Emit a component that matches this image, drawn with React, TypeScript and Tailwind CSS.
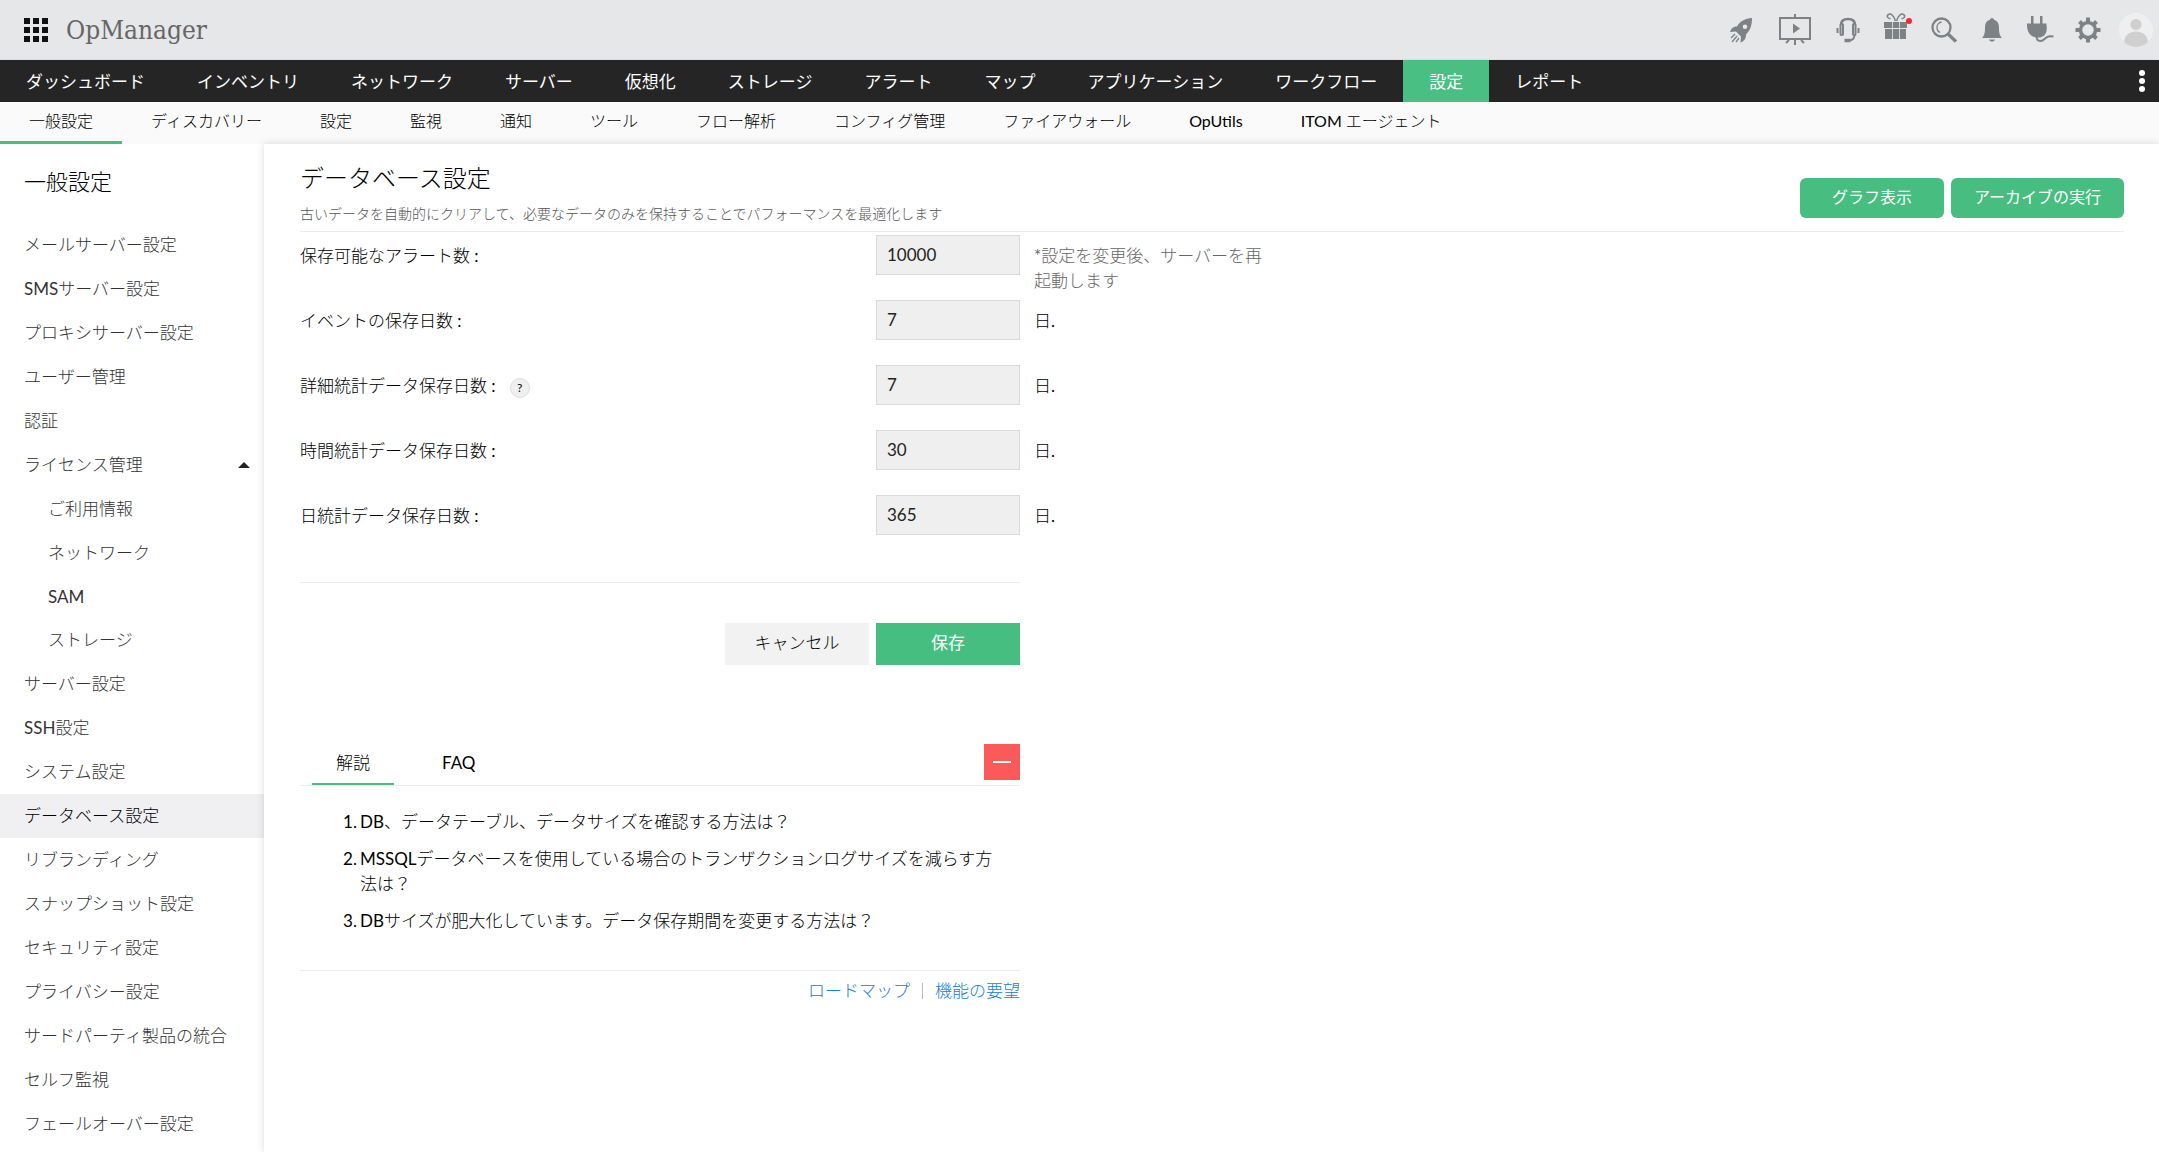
import React, { useState } from "react";

type SideItem = {
  label: string;
  sub?: boolean;
  open?: boolean;
};

type Field = {
  id: string;
  label: string;
  value: string;
  help?: boolean;
};

const NAV = [
  "ダッシュボード",
  "インベントリ",
  "ネットワーク",
  "サーバー",
  "仮想化",
  "ストレージ",
  "アラート",
  "マップ",
  "アプリケーション",
  "ワークフロー",
  "設定",
  "レポート",
];

const SUB_NAV = [
  "一般設定",
  "ディスカバリー",
  "設定",
  "監視",
  "通知",
  "ツール",
  "フロー解析",
  "コンフィグ管理",
  "ファイアウォール",
  "OpUtils",
  "ITOM エージェント",
];

const SIDE_ITEMS: SideItem[] = [
  { label: "メールサーバー設定" },
  { label: "SMSサーバー設定" },
  { label: "プロキシサーバー設定" },
  { label: "ユーザー管理" },
  { label: "認証" },
  { label: "ライセンス管理", open: true },
  { label: "ご利用情報", sub: true },
  { label: "ネットワーク", sub: true },
  { label: "SAM", sub: true },
  { label: "ストレージ", sub: true },
  { label: "サーバー設定" },
  { label: "SSH設定" },
  { label: "システム設定" },
  { label: "データベース設定" },
  { label: "リブランディング" },
  { label: "スナップショット設定" },
  { label: "セキュリティ設定" },
  { label: "プライバシー設定" },
  { label: "サードパーティ製品の統合" },
  { label: "セルフ監視" },
  { label: "フェールオーバー設定" },
];

const FIELDS: Field[] = [
  { id: "alerts", label: "保存可能なアラート数 :", value: "10000" },
  { id: "events", label: "イベントの保存日数 :", value: "7" },
  { id: "detail", label: "詳細統計データ保存日数 :", value: "7", help: true },
  { id: "hourly", label: "時間統計データ保存日数 :", value: "30" },
  { id: "daily", label: "日統計データ保存日数 :", value: "365" },
];

const FAQ_ITEMS = [
  "DB、データテーブル、データサイズを確認する方法は？",
  "MSSQLデータベースを使用している場合のトランザクションログサイズを減らす方法は？",
  "DBサイズが肥大化しています。データ保存期間を変更する方法は？",
];

const Header = () => (
  <header className="flex h-[60px] items-center border-b border-[#dcdddf] bg-[#e6e7e9] pl-6 pr-1.5">
    <button aria-label="アプリ一覧">
      <svg width="24" height="24" viewBox="0 0 24 24" fill="#111">
        {[0, 9, 18].map((y) =>
          [0, 9, 18].map((x) => (
            <rect key={`${x}-${y}`} x={x} y={y} width="6" height="6" />
          ))
        )}
      </svg>
    </button>
    <span className="ml-[18px] font-['DejaVu_Serif_Condensed','DejaVu_Serif',serif] text-[26px] leading-8 text-[#666]">
      OpManager
    </span>
    <div className="ml-auto flex items-center text-[#7f8284]">
      <button aria-label="はじめに" className="flex w-12 justify-center">
        <svg width="24" height="26" viewBox="0 0 24 26" fill="currentColor">
          <path
            fillRule="evenodd"
            d="M23 1C16 1.500 11 4 8 9.500C4.500 9.500 2.500 11 1 15l6-.5 5 5-.5 6c4-1.500 5.500-4 5.500-8C21.500 13 23 8 23 1zM16 7.500a2.300 2.300 0 1 1 0 4.600a2.300 2.300 0 0 1 0-4.600z"
          />
          <path d="M6 17l-4 4M8 19l-5 6M10 21l-3 4" stroke="currentColor" strokeWidth="1.300" />
        </svg>
      </button>
      <button aria-label="プレゼンテーション" className="flex w-[59px] justify-center">
        <svg width="34" height="32" viewBox="0 0 34 32" fill="none" stroke="currentColor" strokeWidth="2">
          <rect x="2" y="4" width="30" height="21" />
          <path d="M17 0v4M17 25v6M11 26l-3 3M23 26l3 3" />
          <path d="M15 9.500l7 5-7 5z" fill="currentColor" stroke="none" />
        </svg>
      </button>
      <button aria-label="サポート" className="flex w-12 justify-center">
        <svg width="24" height="26" viewBox="0 0 24 26" fill="none" stroke="currentColor" strokeWidth="2">
          <path d="M5 8c0-4 3-6 7-6s7 2 7 6" strokeWidth="2.500" />
          <rect x="4.500" y="7" width="2.500" height="11" rx="1" />
          <rect x="17" y="7" width="2.500" height="11" rx="1" />
          <path d="M1.500 11v5M22.500 11v5M18.500 18c0 4-2 5-5 5.500" />
          <path d="M8.500 23.500h6" strokeWidth="3.500" />
        </svg>
      </button>
      <button aria-label="新機能" className="relative flex w-12 justify-center pb-2">
        <svg width="26" height="28" viewBox="0 0 26 28" fill="currentColor">
          <path d="M1 10h8v6H1zM9.800 10h6.400v6H9.800zM17 10h7v6h-7zM2 17h7v10H2zM9.800 17h6.400v10H9.800zM17 17h6v10h-6z" />
          <path d="M12.500 9C11 4 8 1 5.500 2.500S5 7 7.500 6.500M13.500 9C15 4 18 1 20.500 2.500S21 7 18.500 6.500" fill="none" stroke="currentColor" strokeWidth="1.500" />
        </svg>
        <span className="absolute right-2 top-1.5 h-1.5 w-1.5 rounded-full bg-[#f7262f]" />
      </button>
      <button aria-label="検索" className="flex w-12 justify-center">
        <svg width="26" height="26" viewBox="0 0 26 26" fill="none" stroke="currentColor">
          <circle cx="10.500" cy="10.500" r="9" strokeWidth="2.300" />
          <path d="M10.500 5a5.500 5.500 0 0 0-4.500 6c0 2 1 3.500 3 4.500" strokeWidth="1.300" />
          <path d="M17 17l8 7.500" strokeWidth="3.300" />
        </svg>
      </button>
      <button aria-label="アラーム" className="flex w-12 justify-center">
        <svg width="20" height="26" viewBox="0 0 20 26" fill="currentColor">
          <path d="M10 1c1 0 1.800 1 2 1.800C15.800 4 17 7 17 11c0 5 .5 7 3 10H0c2.500-3 3-5 3-10 0-4 1-7 5-8.200C8.200 2 9 1 10 1zM7 22.500h6c-.5 1.500-1.500 2-3 2s-2.500-.5-3-2z" />
        </svg>
      </button>
      <button aria-label="プラグイン" className="flex w-12 justify-center">
        <svg width="28" height="27" viewBox="0 0 28 27" fill="currentColor">
          <path d="M5 0h2.500v8H5zM14 0h2.500v8H14zM1 7.500h19.500V9c1 7-1 11-6.500 12.500H9.500C4 20 1 16 1 9z" />
          <path d="M10.500 20c0 6 5 6 8 3s5-3 9-2.500" fill="none" stroke="currentColor" strokeWidth="2" />
        </svg>
      </button>
      <button aria-label="設定" className="flex w-12 justify-center">
        <svg width="26" height="26" viewBox="0 0 26 26" fill="none" stroke="currentColor">
          <circle cx="13" cy="13" r="7.500" strokeWidth="3.500" />
          <path d="M13 .5v4M13 21.500v4M.5 13h4M21.500 13h4M4.500 4.500l2.500 2.500M19 19l2.500 2.500M21.500 4.500L19 7M7 19l-2.500 2.500" strokeWidth="4" />
        </svg>
      </button>
      <button aria-label="アカウント" className="ml-[7px] h-[34px] w-[34px] overflow-hidden rounded-full bg-[#efefef]">
        <svg width="34" height="34" viewBox="0 0 34 34" fill="#cfcfcf">
          <circle cx="17" cy="11.500" r="5.500" />
          <path d="M5 30c0-7 5-11.500 12-11.500S29 23 29 30c-3 3-7 4-12 4s-9-1-12-4z" />
        </svg>
      </button>
    </div>
  </header>
);

const MainNav = () => (
  <nav className="flex h-[42px] items-stretch bg-[#252525] font-['Lato','Noto_Sans_CJK_JP',sans-serif] text-[17px] text-white">
    {NAV.map((item) => (
      <a
        key={item}
        href="#"
        className={`flex items-center px-[26px] pt-0.5 whitespace-nowrap ${item === "設定" ? "bg-[#4abf83]" : ""}`}
      >
        {item}
      </a>
    ))}
    <button aria-label="その他" className="ml-auto flex flex-col items-center justify-center gap-0.5 px-3.5">
      <span className="h-1.5 w-1.5 rounded-full bg-white" />
      <span className="h-1.5 w-1.5 rounded-full bg-white" />
      <span className="h-1.5 w-1.5 rounded-full bg-white" />
    </button>
  </nav>
);

const SubNav = () => (
  <nav className="flex h-[42px] items-stretch bg-[#fafafa] text-base text-black">
    {SUB_NAV.map((item, i) => (
      <a
        key={item}
        href="#"
        className={`relative z-20 flex items-center border-b-[3px] px-[29px] pb-0.5 whitespace-nowrap ${
          i === 0 ? "border-[#45be80]" : "border-transparent"
        }`}
      >
        {item}
      </a>
    ))}
  </nav>
);

const Sidebar = () => (
  <aside className="w-[264px] shrink-0 bg-white">
    <h2 className="px-6 pt-[22px] pb-[25px] text-[22px] leading-8 text-black">一般設定</h2>
    <ul className="text-[17px] text-[#333]">
      {SIDE_ITEMS.map((item) => (
        <li key={item.label + (item.sub ? "-sub" : "")}>
          <a
            href="#"
            className={`flex items-center justify-between pr-3.5 ${item.sub ? "pl-12" : "pl-6"} ${
              item.label === "SAM" ? "h-[43px]" : "h-11"
            } ${item.label === "データベース設定" ? "bg-[#f0f0f3] text-black" : ""}`}
          >
            {item.label}
            {item.open && (
              <svg width="12" height="6" viewBox="0 0 12 6" fill="#222">
                <path d="M6 0l6 6H0z" />
              </svg>
            )}
          </a>
        </li>
      ))}
    </ul>
  </aside>
);

const HelpPanel = () => {
  const [tab, setTab] = useState("解説");

  return (
    <section className="mt-[79px] max-w-[720px]">
      <div className="flex h-[42px] items-start border-b border-[#ebebeb] pl-3">
        {["解説", "FAQ"].map((name) => (
          <button
            key={name}
            onClick={() => setTab(name)}
            className={`mr-6 h-[41px] border-b-2 px-6 pb-0.5 ${
              tab === name ? "border-[#45be80]" : "border-transparent"
            }`}
          >
            {name}
          </button>
        ))}
        <button aria-label="閉じる" className="ml-auto flex h-9 w-9 items-center justify-center bg-[#fb5a5a]">
          <span className="h-0.5 w-[18px] bg-white" />
        </button>
      </div>
      <ol className="flex list-none flex-col gap-3 border-b border-[#ebebeb] pt-[23px] pr-6 pb-[37px] pl-[43px] leading-[25px]">
        {FAQ_ITEMS.map((item, i) => (
          <li key={item} className="flex">
            <span className="w-[17px] shrink-0">{i + 1}.</span>
            <a href="#">{item}</a>
          </li>
        ))}
      </ol>
      <div className="flex items-center justify-end pt-[7px] text-[#1380d6]">
        <a href="#">ロードマップ</a>
        <span className="mx-3 h-4 w-px bg-[#bbb]" />
        <a href="#">機能の要望</a>
      </div>
    </section>
  );
};

const DatabaseSettings = () => (
  <main className="relative z-10 flex-1 bg-white pr-[35px] pl-9 text-[17px] text-black shadow-[0_0_8px_rgba(0,0,0,0.15)]">
    <div className="flex h-[88px] items-start justify-between border-b border-[#ebebeb]">
      <div className="pt-4">
        <h1 className="text-2xl leading-9">データベース設定</h1>
        <p className="mt-1.5 text-sm leading-6 text-[#555]">
          古いデータを自動的にクリアして、必要なデータのみを保持することでパフォーマンスを最適化します
        </p>
      </div>
      <div className="flex gap-[7px] pt-[34px] font-['Lato','Noto_Sans_CJK_JP',sans-serif] text-base text-white">
        <button className="h-10 w-36 rounded-md bg-[#47bd80] pb-0.5">グラフ表示</button>
        <button className="h-10 w-[173px] rounded-md bg-[#47bd80] pb-0.5">アーカイブの実行</button>
      </div>
    </div>

    <form>
      <div className="pt-[3px]">
        {FIELDS.map((field, i) => (
          <div key={field.id} className="flex h-[65px] items-start">
            <div className="flex h-[42px] w-[576px] items-center">
              <label htmlFor={field.id}>{field.label}</label>
              {field.help && (
                <button
                  type="button"
                  aria-label="ヘルプ"
                  className="mt-1 ml-3.5 h-5 w-5 rounded-full border border-[#ddd] bg-[#f0f0f0] text-xs leading-4"
                >
                  ?
                </button>
              )}
            </div>
            <input
              id={field.id}
              defaultValue={field.value}
              className="h-10 w-36 border border-[#dadada] bg-[#efefef] px-2.5 pb-0.5 text-[17px] text-[#222]"
            />
            <p className={`ml-3.5 w-[240px] pt-2 leading-[25px] ${i === 0 ? "text-[#666]" : ""}`}>
              {i === 0 ? "*設定を変更後、サーバーを再起動します" : "日."}
            </p>
          </div>
        ))}
      </div>
      <div className="mt-[22px] flex max-w-[720px] justify-end gap-[7px] border-t border-[#ebebeb] pt-10">
        <button type="button" className="h-[42px] w-36 bg-[#f2f2f2] pb-0.5">
          キャンセル
        </button>
        <button
          type="submit"
          className="h-[42px] w-36 bg-[#45be80] pb-0.5 font-['Lato','Noto_Sans_CJK_JP',sans-serif] text-white"
        >
          保存
        </button>
      </div>
    </form>

    <HelpPanel />
  </main>
);

const App = () => {
  return (
    <div className="flex min-h-screen flex-col overflow-x-hidden bg-white font-['Lato','Noto_Sans_CJK_JP_Light','Noto_Sans_CJK_JP',sans-serif]">
      <Header />
      <MainNav />
      <SubNav />
      <div className="flex flex-1">
        <Sidebar />
        <DatabaseSettings />
      </div>
    </div>
  );
};

export default App;
